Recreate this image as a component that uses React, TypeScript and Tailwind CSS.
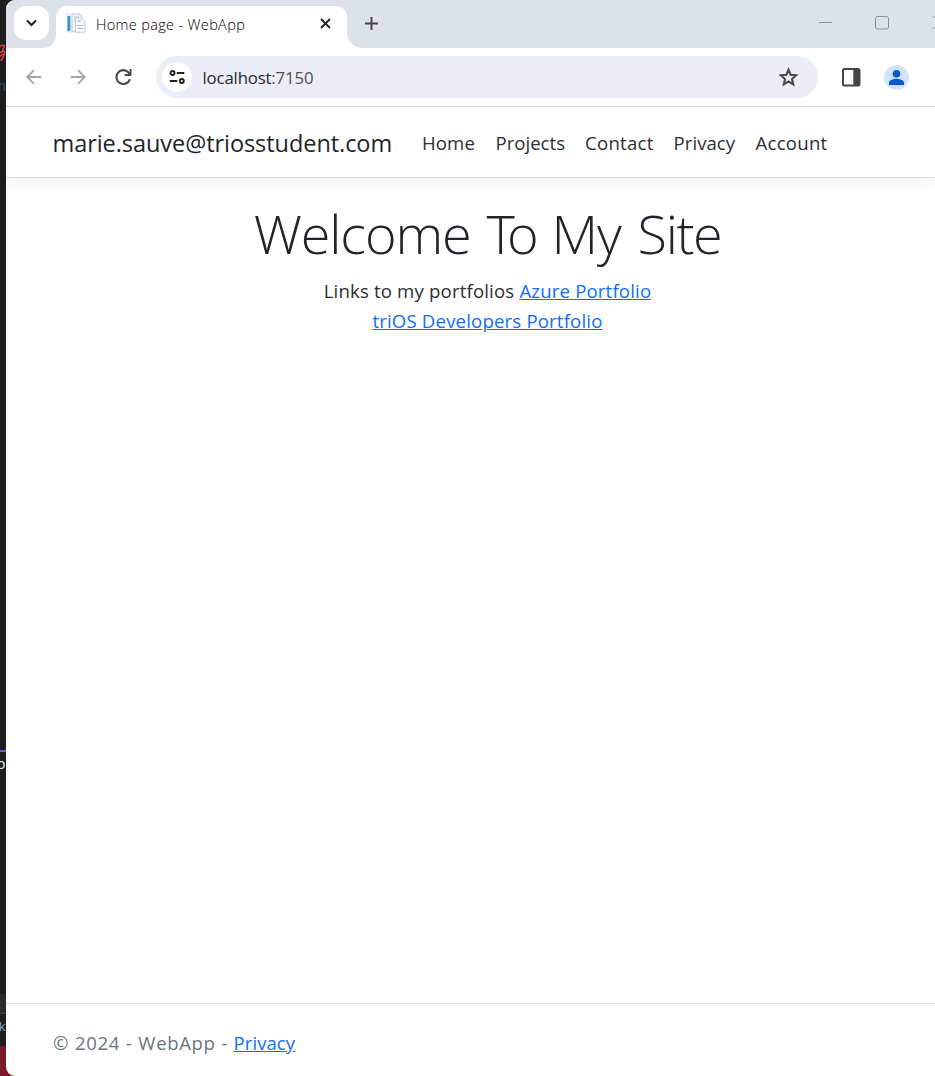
const navItems = [
  { label: "Home", cls: "w-[73.5px] tracking-[0.1px]" },
  { label: "Projects", cls: "w-[89.5px] tracking-[0px]" },
  { label: "Contact", cls: "w-[88.5px] tracking-[0.25px]" },
  { label: "Privacy", cls: "w-[82px] tracking-[0.05px]" },
  { label: "Account", cls: "w-[80px] tracking-[0.25px]" },
];

function EditorEdge() {
  return (
    <div className="flex h-full w-[6px] shrink-0 flex-col overflow-hidden bg-[#1e1e1e] font-['Liberation_Sans',sans-serif] whitespace-nowrap">
      <svg className="mt-[42px] h-[22px] w-[6px] shrink-0" viewBox="0 0 6 22" fill="none" stroke="#e0404c" strokeWidth="1.5">
        <path d="M0 4.500q3-2 4.500-1L2 10.500M0 11q4-3 4.500-1T1 19M0 14.500l3-2.500" />
      </svg>
      <div className="mt-[14px] h-[16px] -ml-[2px] text-[14px] leading-[16px] text-[#2f527b]">n</div>
      <div className="mt-[656px] h-[2px] shrink-0 bg-[#6a5acd]" />
      <div className="-ml-[3px] mt-[4px] h-[16px] text-[15px] leading-[16px] text-[#d8e4ee]">o</div>
      <div className="mt-[222px] h-[20px] shrink-0 border-b border-[#444] bg-[#2b2b2b]" />
      <div className="-ml-[1px] mt-[4px] h-[18px] text-[13px] leading-[18px] text-[#6fa6c4]">k</div>
      <div className="mt-[10px] flex-1 bg-[#7d182b]" />
    </div>
  );
}

function TabStrip() {
  return (
    <div className="flex h-[48px] shrink-0 bg-[#dde1e9]">
      <div className="flex w-[50px] rounded-tl-[10px] pl-2 pt-[6px]">
        <div className="flex h-[34px] w-[35px] items-center justify-center rounded-[12px] bg-white">
          <svg width="12" height="8" viewBox="0 0 12 8" fill="none" stroke="#1f1f1f" strokeWidth="2">
            <path d="M1 1.500 5.500 6 10 1.500" />
          </svg>
        </div>
      </div>
      <div className="relative mt-[6px] flex h-[42px] w-[291px] rounded-t-[11px] bg-white">
        <svg className="absolute -left-[13px] bottom-0" width="13" height="13" viewBox="0 0 13 13" fill="#fff">
          <path d="M13 0v13H0A13 13 0 0 0 13 0Z" />
        </svg>
        <svg className="absolute -right-[15px] bottom-0" width="15" height="15" viewBox="0 0 15 15" fill="#fff">
          <path d="M0 0v15h15A15 15 0 0 1 0 0Z" />
        </svg>
        <svg className="ml-[10px] mt-[7px]" width="21" height="21" viewBox="0 0 21 21">
          <path d="M1 1h13v18H1z" fill="#eef3f7" stroke="#ccd5dc" strokeWidth=".6" />
          <path d="M1.500 3H4v15H1.500z" fill="#3b94ce" />
          <path d="M4 3h1v15H4z" fill="#a9d3ec" />
          <path d="M6 1h8l2 3v14.500H6z" fill="#f0f3f5" stroke="#bac4cd" strokeWidth=".8" />
          <path d="M8 4h5M8 6h6M8 8h6" stroke="#a4c3da" strokeWidth=".8" />
          <path d="M9.500 11v-6h6l3.500 3v11h-9.500z" fill="#f3f6f8" stroke="#bac7d6" strokeWidth=".8" />
          <path d="M9.500 12.500h9.500v6.500H9.500z" fill="#fff" stroke="#c0c8dc" strokeWidth=".8" />
          <path d="M11.500 15.500h6M11 8h4" stroke="#9bb6cf" strokeWidth="1" />
        </svg>
        <span className="ml-[9px] mt-[8px] w-[160px] whitespace-nowrap text-[14.500px] font-light leading-[21px] tracking-[0.34px] text-black">Home page - WebApp</span>
        <svg className="ml-[64px] mt-[12px]" width="11" height="11" viewBox="0 0 11 11" stroke="#1f1f1f" strokeWidth="1.800">
          <path d="m1 1 9 9M10 1l-9 9" />
        </svg>
      </div>
      <svg className="ml-[18px] mt-[17px]" width="13" height="13" viewBox="0 0 13 13" stroke="#444746" strokeWidth="2">
        <path d="M6.500 0v13M0 6.500h13" />
      </svg>
      <div className="ml-auto flex w-[116px] overflow-hidden">
        <svg className="shrink-0" width="122" height="48" viewBox="0 0 122 48" fill="none" stroke="#8c8f94">
          <path d="M0 22.500h13" />
          <rect x="56.500" y="16.500" width="13" height="12.500" rx="2" />
          <path d="m114 16 13 13M127 16l-13 13" />
        </svg>
      </div>
    </div>
  );
}

function Toolbar() {
  return (
    <div className="flex h-[59px] shrink-0 border-b border-[#dedfe1] bg-white">
      <svg className="ml-[20px] mt-[21px] shrink-0" width="16" height="16" viewBox="0 0 16 16" fill="none" stroke="#a5a6a8" strokeWidth="1.800">
        <path d="M15.300 8H1.500M8 1.200 1.300 8 8 14.800" />
      </svg>
      <svg className="ml-[28px] mt-[21px] shrink-0" width="16" height="16" viewBox="0 0 16 16" fill="none" stroke="#a5a6a8" strokeWidth="1.800">
        <path d="M.7 8h13.800M8 1.200 14.700 8 8 14.800" />
      </svg>
      <svg className="ml-[29px] mt-[21px] shrink-0" width="17" height="17" viewBox="0 0 17 17" fill="none" stroke="#444746" strokeWidth="2.100">
        <path d="M14.900 10.200A6.900 6.900 0 1 1 13.600 3.600L15 5.400" />
        <path d="M15.500 0v6H9.700" strokeWidth="1.900" />
      </svg>
      <div className="ml-[24px] mt-2 flex h-[42px] w-[662px] items-center rounded-full bg-[#ebeef8]">
        <div className="ml-[6px] flex size-[30px] shrink-0 items-center justify-center rounded-full bg-white">
          <svg width="16" height="14" viewBox="0 0 16 14" fill="none" stroke="#1f1f1f" strokeWidth="1.900">
            <circle cx="3.500" cy="3" r="2" />
            <path d="M7.800 3h7.500M.8 11h7.500" />
            <circle cx="12.800" cy="11" r="2" />
          </svg>
        </div>
        <span className="ml-[10.500px] mt-[1px] flex-1 whitespace-nowrap text-[16.800px] font-normal leading-6 tracking-[-0.16px] text-[#2a2a2a]">
          localhost<span className="text-[#505050]">:7150</span>
        </span>
        <svg className="mr-[19px]" width="21" height="20" viewBox="0 0 21 20" fill="none" stroke="#444746" strokeWidth="2">
          <path d="m10.500 2.700 2.100 5.100 5.600.5-4.200 3.700 1.250 5.400-4.750-2.900-4.750 2.900L7 12 2.800 8.300l5.600-.5Z" />
        </svg>
      </div>
      <svg className="ml-[24px] mt-[20px] shrink-0" width="19" height="19" viewBox="0 0 19 19">
        <rect x="1" y="1" width="16.500" height="16.500" rx="1.500" fill="none" stroke="#444746" strokeWidth="2" />
        <path d="M11.300 1h6v16.500h-6z" fill="#444746" />
      </svg>
      <svg className="ml-[23px] mt-[17px] shrink-0" width="25" height="25" viewBox="0 0 25 25">
        <circle cx="12.500" cy="12.500" r="12.500" fill="#d3e3fd" />
        <circle cx="12.500" cy="8.700" r="3.800" fill="#0b57d0" />
        <path d="M5 20v-2.300c0-2.800 5-3.900 7.500-3.900s7.500 1.100 7.500 3.900V20Z" fill="#0b57d0" />
      </svg>
    </div>
  );
}

export default function App() {
  return (
    <div className="flex h-[1076px] w-[935px] overflow-hidden bg-[linear-gradient(#1e1e1e_1046px,#7d182b_1046px)] font-['Open_Sans',sans-serif]">
      <EditorEdge />
      <div className="flex min-w-0 flex-1 flex-col overflow-hidden rounded-l-[9px] bg-white">
        <TabStrip />
        <Toolbar />
        <header className="flex h-[71px] shrink-0 items-center border-b border-[#dee2e6] pl-[46.500px] pt-[2px] shadow-[0_5px_15px_rgba(0,0,0,0.05)]">
          <a className="w-[369.500px] whitespace-nowrap text-[23.500px] font-normal leading-[38px] tracking-[-0.06px] text-[#212529]">marie.sauve@triosstudent.com</a>
          <nav className="flex whitespace-nowrap text-[18.600px] font-normal leading-[30px] text-[#2b2f33]">
            {navItems.map((item) => (
              <a key={item.label} className={item.cls}>{item.label}</a>
            ))}
          </nav>
        </header>
        <main className="flex flex-1 flex-col items-center pl-[34px] pt-[18px]">
          <h1 className="mb-[10px] mt-1 whitespace-nowrap text-[54px] font-light leading-[66px] tracking-[-1.1px] text-[#212529]">
            Welcome <span className="ml-[3px] tracking-[-8px]">T</span>o{" "}
            <span className="ml-px">My</span> <span className="ml-[4px] tracking-[-1.4px]">Site</span>
          </h1>
          <p className="whitespace-nowrap text-center text-[18.600px] font-normal leading-[30px] tracking-[0.17px] text-[#2b2f33]">
            Links to my portfolios{" "}
            <a className="text-[#0d6efd] underline">Azure Portfolio</a>
            <br />
            <a className="text-[#0d6efd] underline">triOS Developers Portfolio</a>
          </p>
        </main>
        <footer className="flex h-[73px] shrink-0 items-center border-t border-[#dee2e6] pl-[47px] pt-[5px] text-[18.600px] font-normal text-[#6c757d]">
          <span className="w-[180.500px] whitespace-pre tracking-[0.6px] [word-spacing:0.5px]">© 2024 - WebApp - </span>
          <a className="tracking-[0.05px] text-[#0d6efd] underline">Privacy</a>
        </footer>
      </div>
    </div>
  );
}
